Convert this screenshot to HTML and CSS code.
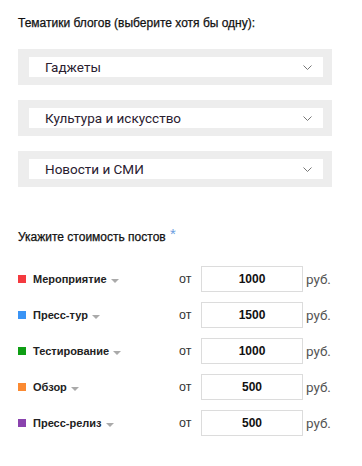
FILE: index.html
```html
<!DOCTYPE html>
<html lang="ru">
<head>
<meta charset="utf-8">
<link rel="stylesheet" href="styles.css">
</head>
<body>
<div class="page">
  <div class="topics-title">Тематики блогов (выберите хотя бы одну):</div>
  <div class="topics">
    <div class="select-wrap">
      <div class="select"><span class="select-text">Гаджеты</span>
        <svg class="chev" width="9" height="5" viewBox="0 0 9 5"><path d="M0.5 0.5 L4.5 4.5 L8.5 0.5" fill="none" stroke="#777" stroke-width="1"/></svg>
      </div>
    </div>
    <div class="select-wrap">
      <div class="select"><span class="select-text">Культура и искусство</span>
        <svg class="chev" width="9" height="5" viewBox="0 0 9 5"><path d="M0.5 0.5 L4.5 4.5 L8.5 0.5" fill="none" stroke="#777" stroke-width="1"/></svg>
      </div>
    </div>
    <div class="select-wrap">
      <div class="select"><span class="select-text">Новости и СМИ</span>
        <svg class="chev" width="9" height="5" viewBox="0 0 9 5"><path d="M0.5 0.5 L4.5 4.5 L8.5 0.5" fill="none" stroke="#777" stroke-width="1"/></svg>
      </div>
    </div>
  </div>

  <div class="price-title">Укажите стоимость постов <span class="req">*</span></div>

  <div class="prices">
    <div class="row">
      <div class="label"><span class="sq red"></span><span class="name">Мероприятие</span><span class="tri"></span></div>
      <span class="from">от</span>
      <div class="input">1000</div>
      <span class="cur">руб.</span>
    </div>
    <div class="row">
      <div class="label"><span class="sq blue"></span><span class="name">Пресс-тур</span><span class="tri"></span></div>
      <span class="from">от</span>
      <div class="input">1500</div>
      <span class="cur">руб.</span>
    </div>
    <div class="row">
      <div class="label"><span class="sq green"></span><span class="name">Тестирование</span><span class="tri"></span></div>
      <span class="from">от</span>
      <div class="input">1000</div>
      <span class="cur">руб.</span>
    </div>
    <div class="row">
      <div class="label"><span class="sq orange"></span><span class="name">Обзор</span><span class="tri"></span></div>
      <span class="from">от</span>
      <div class="input">500</div>
      <span class="cur">руб.</span>
    </div>
    <div class="row">
      <div class="label"><span class="sq purple"></span><span class="name">Пресс-релиз</span><span class="tri"></span></div>
      <span class="from">от</span>
      <div class="input">500</div>
      <span class="cur">руб.</span>
    </div>
  </div>
</div>
</body>
</html>
```

FILE: styles.css
```css
html, body {
  margin: 0;
  padding: 0;
  background: #fff;
}
.page {
  width: 362px;
  padding: 16px 0 0 18px;
  box-sizing: border-box;
  font-family: "Liberation Sans", Arial, sans-serif;
  color: #111;
}
.topics-title {
  font-size: 12px;
  line-height: 14px;
  -webkit-text-stroke: 0.25px #111;
}
.topics {
  margin-top: 19px;
  display: flex;
  flex-direction: column;
  gap: 15px;
  width: 314px;
}
.select-wrap {
  background: #ededed;
  padding: 8px 9px 8px 11px;
}
.select {
  background: #fff;
  height: 20px;
  display: flex;
  align-items: center;
  justify-content: space-between;
  padding: 0 11px 0 16px;
}
.select-text {
  font-family: Roboto, "Noto Sans", sans-serif;
  font-size: 13.5px;
  color: #2a2030;
  line-height: 20px;
}
.chev {
  display: block;
}
.price-title {
  margin-top: 40px;
  font-size: 12px;
  line-height: 14px;
  -webkit-text-stroke: 0.25px #111;
}
.req {
  color: #6b9de0;
  font-size: 15px;
  vertical-align: 2px;
  margin-left: 1px;
  -webkit-text-stroke: 0 transparent;
}
.prices {
  margin-top: 22px;
  display: flex;
  flex-direction: column;
  gap: 10px;
}
.row {
  display: flex;
  align-items: center;
  height: 26px;
}
.label {
  width: 161px;
  display: flex;
  align-items: center;
}
.sq {
  width: 8px;
  height: 8px;
  margin-right: 7px;
  margin-top: -1px;
}
.red { background: #f43a3f; }
.blue { background: #3a94f5; }
.green { background: #0e9e14; }
.orange { background: #fb8a32; }
.purple { background: #8a43ae; }
.name {
  font-size: 11px;
  font-weight: bold;
  color: #222;
}
.tri {
  width: 0;
  height: 0;
  border-left: 4px solid transparent;
  border-right: 4px solid transparent;
  border-top: 4px solid #aaa;
  margin-left: 4px;
  margin-top: 3px;
}
.from {
  width: 22px;
  font-size: 12.5px;
  color: #333;
}
.input {
  width: 102px;
  height: 26px;
  box-sizing: border-box;
  border: 1px solid #dcdcdc;
  display: flex;
  align-items: center;
  justify-content: center;
  font-size: 12px;
  font-weight: bold;
  color: #111;
}
.cur {
  margin-left: 3px;
  font-family: Roboto, "Noto Sans", sans-serif;
  font-size: 13.5px;
  color: #555;
}
```
